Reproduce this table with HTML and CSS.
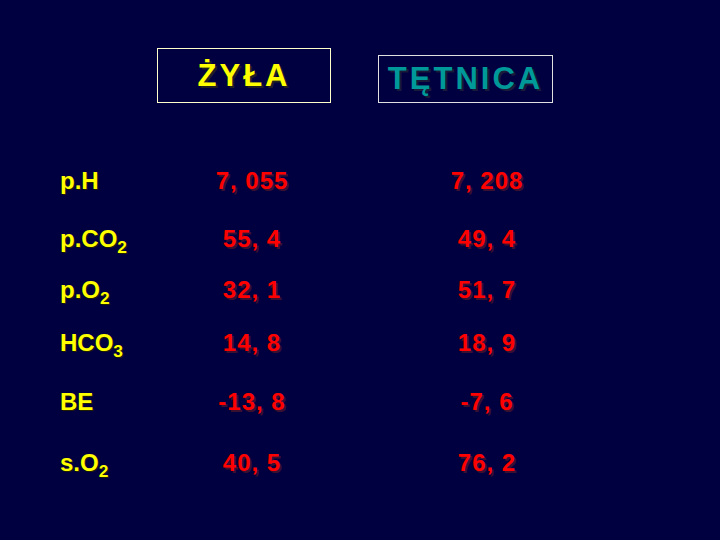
FILE: index.html
```html
<!DOCTYPE html>
<html lang="pl">
  <head>
    <meta charset="UTF-8" />
    <meta name="viewport" content="width=device-width, initial-scale=1.0" />
    <title>Gazometria</title>
    <link rel="stylesheet" href="styles.css">
  </head>
  <body>
    <div class="slide">
      <div class="heads">
        <div class="head head-vein">ŻYŁA</div>
        <div class="head head-art">TĘTNICA</div>
      </div>
      <div class="table">
        <div class="label">p.H</div>
        <div class="val">7, 055</div>
        <div class="val art">7, 208</div>

        <div class="label">p.CO<sub>2</sub></div>
        <div class="val">55, 4</div>
        <div class="val art">49, 4</div>

        <div class="label">p.O<sub>2</sub></div>
        <div class="val">32, 1</div>
        <div class="val art">51, 7</div>

        <div class="label">HCO<sub>3</sub></div>
        <div class="val">14, 8</div>
        <div class="val art">18, 9</div>

        <div class="label">BE</div>
        <div class="val">-13, 8</div>
        <div class="val art">-7, 6</div>

        <div class="label">s.O<sub>2</sub></div>
        <div class="val">40, 5</div>
        <div class="val art">76, 2</div>
      </div>
    </div>
  </body>
</html>
```

FILE: styles.css
```css
body {
  margin: 0;
  padding: 0;
  background-color: #000040;
  font-family: "Liberation Sans", Arial, sans-serif;
  font-weight: bold;
}

.slide {
  width: 720px;
  height: 540px;
  overflow: hidden;
}

.heads {
  display: flex;
  align-items: flex-end;
  gap: 47px;
  padding: 48px 0 0 157px;
}

.head {
  display: flex;
  align-items: center;
  justify-content: center;
  box-sizing: border-box;
}

.head-vein {
  width: 174px;
  height: 55px;
  border: 1px solid #ffffcc;
  color: #ffff00;
  font-size: 31px;
  letter-spacing: 3px;
  text-shadow: 2px 2px 0 #202020;
}

.head-art {
  width: 175px;
  height: 48px;
  border: 1px solid #e0e0e0;
  color: #009999;
  font-size: 31px;
  letter-spacing: 3px;
  text-shadow: 2px 2px 0 #1a1a3a;
}

.table {
  display: grid;
  grid-template-columns: 130px 124px 111px 124px;
  grid-template-rows: 58px 58px 44px 62px 56px 66px;
  align-items: center;
  margin-top: 49px;
  padding-left: 60px;
  font-size: 24px;
}

.label {
  grid-column: 1;
  color: #ffff00;
  text-shadow: 1px 1px 0 #202000;
}

.label sub {
  font-size: 0.72em;
  vertical-align: -0.35em;
  line-height: 0;
}

.val {
  grid-column: 2;
  text-align: center;
  color: #ff0000;
  letter-spacing: 1px;
  text-shadow: 2px 2px 0 #3a1030;
}

.val.art {
  grid-column: 4;
}
```
